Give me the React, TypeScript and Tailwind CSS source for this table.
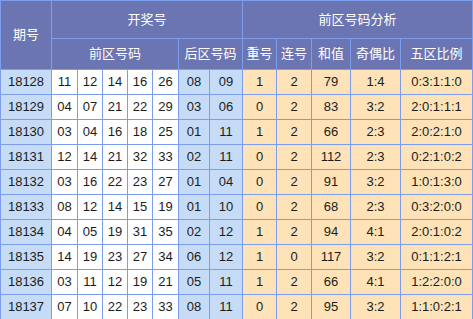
import { Fragment } from "react";

const rows = [
  ["18128", ["11", "12", "14", "16", "26"], ["08", "09"], ["1", "2", "79", "1:4", "0:3:1:1:0"]],
  ["18129", ["04", "07", "21", "22", "29"], ["03", "06"], ["0", "2", "83", "3:2", "2:0:1:1:1"]],
  ["18130", ["03", "04", "16", "18", "25"], ["01", "11"], ["1", "2", "66", "2:3", "2:0:2:1:0"]],
  ["18131", ["12", "14", "21", "32", "33"], ["02", "11"], ["0", "2", "112", "2:3", "0:2:1:0:2"]],
  ["18132", ["03", "16", "22", "23", "27"], ["01", "04"], ["0", "2", "91", "3:2", "1:0:1:3:0"]],
  ["18133", ["08", "12", "14", "15", "19"], ["01", "10"], ["0", "2", "68", "2:3", "0:3:2:0:0"]],
  ["18134", ["04", "05", "19", "31", "35"], ["02", "12"], ["1", "2", "94", "4:1", "2:0:1:0:2"]],
  ["18135", ["14", "19", "23", "27", "34"], ["06", "12"], ["1", "0", "117", "3:2", "0:1:1:2:1"]],
  ["18136", ["03", "11", "12", "19", "21"], ["05", "11"], ["1", "2", "66", "4:1", "1:2:2:0:0"]],
  ["18137", ["07", "10", "22", "23", "33"], ["08", "11"], ["0", "2", "95", "3:2", "1:1:0:2:1"]],
] as const;

const head = "bg-[#6b75b1] text-white flex items-center justify-center";
const cell = "flex items-center justify-center";

export default function App() {
  return (
    <div className="h-[319px] w-[473px] overflow-hidden bg-white">
      <div
        className="grid w-[473px] grid-cols-[50px_25px_24px_24px_24px_25px_30px_32px_33px_34px_38px_49px_71px] grid-rows-[37px_30px_repeat(10,24px)] gap-px bg-[#7c9cec] p-px text-[13px] text-[#1c1c1c]"
        style={{ fontFamily: '"Liberation Sans", Arial, "Noto Sans CJK SC", sans-serif' }}
      >
        <div className={`${head} row-span-2`}>期号</div>
        <div className={`${head} col-span-7`}>开奖号</div>
        <div className={`${head} col-span-5`}>前区号码分析</div>
        <div className={`${head} col-span-5`}>前区号码</div>
        <div className={`${head} col-span-2`}>后区号码</div>
        <div className={head}>重号</div>
        <div className={head}>连号</div>
        <div className={head}>和值</div>
        <div className={head}>奇偶比</div>
        <div className={head}>五区比例</div>

        {rows.map(([issue, front, back, stats]) => (
          <Fragment key={issue}>
            <div className={`${cell} bg-[#c6dcf6]`}>{issue}</div>
            {front.map((n, i) => (
              <div key={"f" + i} className={`${cell} bg-white`}>{n}</div>
            ))}
            {back.map((n, i) => (
              <div key={"b" + i} className={`${cell} bg-[#c6dcf6]`}>{n}</div>
            ))}
            {stats.map((s, i) => (
              <div key={"s" + i} className={`${cell} bg-[#fde3b7]`}>{s}</div>
            ))}
          </Fragment>
        ))}
      </div>
    </div>
  );
}
